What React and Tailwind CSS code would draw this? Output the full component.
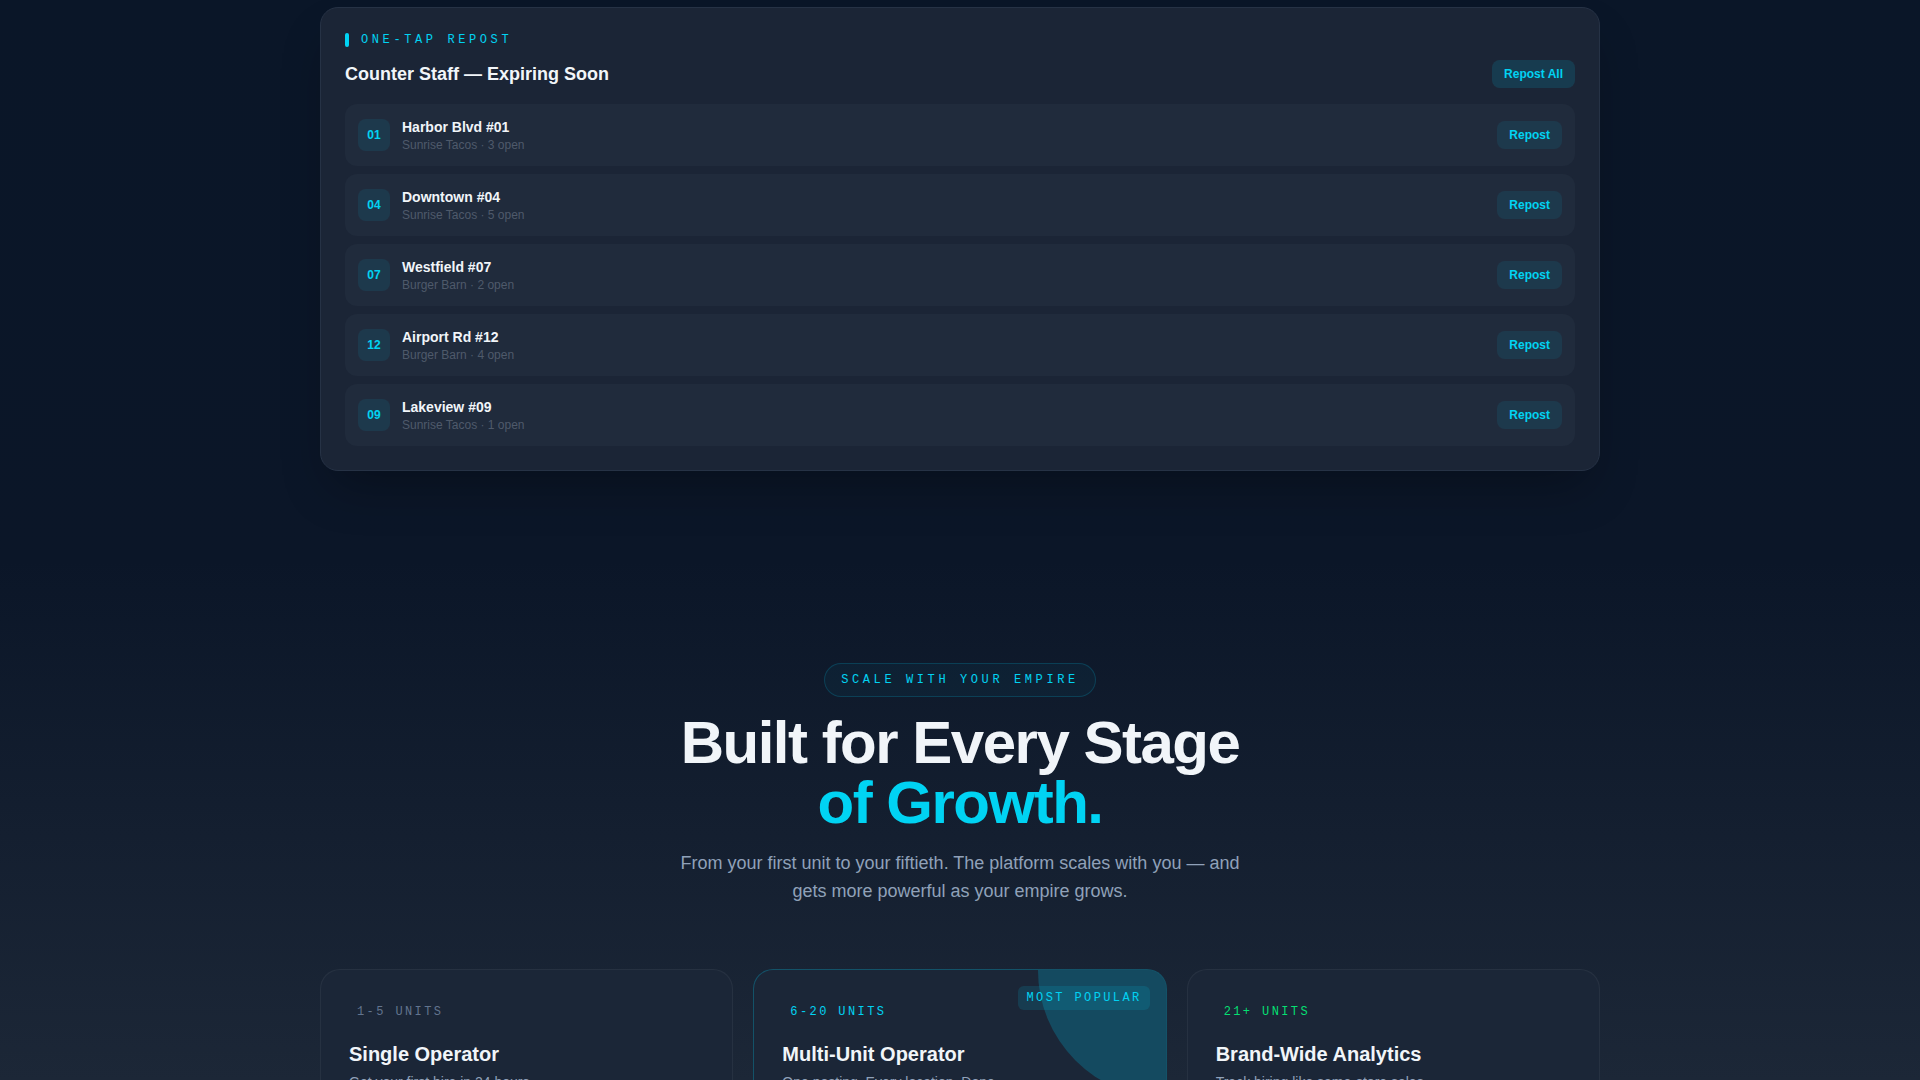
const stores = [
  { num: '01', name: 'Harbor Blvd #01', brand: 'Sunrise Tacos', open: 3 },
  { num: '04', name: 'Downtown #04', brand: 'Sunrise Tacos', open: 5 },
  { num: '07', name: 'Westfield #07', brand: 'Burger Barn', open: 2 },
  { num: '12', name: 'Airport Rd #12', brand: 'Burger Barn', open: 4 },
  { num: '09', name: 'Lakeview #09', brand: 'Sunrise Tacos', open: 1 },
];

const tiers = [
  {
    units: '1-5 UNITS',
    unitsColor: 'text-slate-500',
    title: 'Single Operator',
    desc: 'Get your first hire in 24 hours.',
  },
  {
    units: '6-20 UNITS',
    unitsColor: 'text-cyan-400',
    title: 'Multi-Unit Operator',
    desc: 'One posting. Every location. Done.',
    popular: true,
  },
  {
    units: '21+ UNITS',
    unitsColor: 'text-green-400',
    title: 'Brand-Wide Analytics',
    desc: 'Track hiring like same-store sales.',
  },
];

const mono = "font-['Liberation_Mono',monospace]";

const RepostPanel = () => (
  <div className="rounded-[18px] border border-[#263245] bg-[#1b2536] p-6 shadow-2xl shadow-black/30">
    <div className="flex items-center gap-3">
      <span className="h-3.5 w-1 rounded-full bg-cyan-400" />
      <span className={`${mono} text-xs uppercase tracking-[0.3em] text-cyan-400`}>One-Tap Repost</span>
    </div>
    <div className="mt-3 flex items-center justify-between">
      <h3 className="text-lg font-semibold text-slate-100">Counter Staff — Expiring Soon</h3>
      <button className="rounded-lg bg-cyan-500/15 px-3 py-1.5 text-xs font-bold text-cyan-400">Repost All</button>
    </div>
    <div className="mt-4 flex flex-col gap-2">
      {stores.map((s) => (
        <div
          key={s.num}
          className="flex items-center justify-between rounded-xl border border-transparent bg-[#202b3c] px-3 py-3"
        >
          <div className="flex items-center gap-3">
            <div className="flex h-8 w-8 items-center justify-center rounded-lg bg-cyan-500/10 text-xs font-bold text-cyan-400">
              {s.num}
            </div>
            <div>
              <div className="text-sm font-semibold text-slate-100">{s.name}</div>
              <div className="text-xs text-[#4f5a6b]">
                {s.brand} · {s.open} open
              </div>
            </div>
          </div>
          <button className="rounded-lg bg-cyan-500/10 px-3 py-1.5 text-xs font-bold text-cyan-400">Repost</button>
        </div>
      ))}
    </div>
  </div>
);

const TierCard = ({ tier }) => (
  <div
    className={`relative overflow-hidden rounded-[20px] border p-7 ${
      tier.popular ? 'border-cyan-500/30 bg-[#1b2637]' : 'border-white/[0.05] bg-[#1b2637]'
    }`}
  >
    {tier.popular && (
      <>
        <div className="absolute -right-32 -top-32 h-64 w-64 rounded-full bg-cyan-500/25" />
        <span
          className={`${mono} absolute right-4 top-4 rounded-md bg-cyan-500/15 px-2 py-1 text-xs uppercase tracking-[0.2em] text-cyan-400`}
        >
          Most Popular
        </span>
      </>
    )}
    <div className="relative">
      <span className={`${mono} inline-block px-2 py-1 text-xs tracking-[0.2em] ${tier.unitsColor}`}>
        {tier.units}
      </span>
      <h3 className="mt-4 text-xl font-bold text-slate-100">{tier.title}</h3>
      <p className="mt-1 text-sm text-slate-400">{tier.desc}</p>
      <ul className="mt-6 space-y-3 text-sm text-slate-300">
        <li>Unlimited job postings</li>
        <li>One-tap reposting</li>
        <li>Applicant tracking</li>
      </ul>
    </div>
  </div>
);

export default function App() {
  return (
    <div className="min-h-screen bg-[linear-gradient(to_bottom,#0a1628_0px,#0b1628_560px,#1c2737_1080px,#1e293b_1400px)] font-['Liberation_Sans',Arial,sans-serif]">
      <section className="px-8 pb-24 pt-[7px]">
        <div className="mx-auto max-w-7xl">
          <RepostPanel />
        </div>
      </section>

      <section className="px-8 pb-24 pt-24">
        <div className="mx-auto max-w-7xl">
          <div className="flex flex-col items-center text-center">
            <span
              className={`${mono} rounded-full border border-cyan-500/20 bg-cyan-500/5 px-4 py-2 text-xs uppercase tracking-[0.3em] text-cyan-400`}
            >
              Scale With Your Empire
            </span>
            <h2 className="mt-4 text-6xl font-bold leading-none tracking-tight text-slate-100">
              Built for Every Stage
              <br />
              <span className="text-cyan-400">of Growth.</span>
            </h2>
            <p className="mt-4 max-w-xl text-lg text-slate-400">
              From your first unit to your fiftieth. The platform scales with you — and gets more powerful as your
              empire grows.
            </p>
          </div>

          <div className="mt-16 grid grid-cols-3 gap-5">
            {tiers.map((t) => (
              <TierCard key={t.title} tier={t} />
            ))}
          </div>
        </div>
      </section>
    </div>
  );
}
